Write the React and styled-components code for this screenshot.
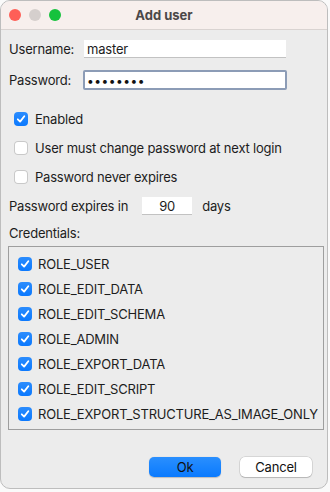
import React from 'react';
import styled, { createGlobalStyle } from 'styled-components';

const GlobalStyle = createGlobalStyle`
  html, body {
    margin: 0;
    padding: 0;
    background: #fafafa;
  }
  body {
    font-family: Inter, "Noto Sans", "Liberation Sans", sans-serif;
    font-size: 13px;
    letter-spacing: -0.2px;
    color: #1d1d1d;
  }
`;

const roles = [
  'ROLE_USER',
  'ROLE_EDIT_DATA',
  'ROLE_EDIT_SCHEMA',
  'ROLE_ADMIN',
  'ROLE_EXPORT_DATA',
  'ROLE_EDIT_SCRIPT',
  'ROLE_EXPORT_STRUCTURE_AS_IMAGE_ONLY',
];

function CheckBox({ checked }) {
  return (
    <Box $checked={checked}>
      {checked && (
        <svg width="10" height="10" viewBox="0 0 10 10">
          <path d="M1.8 5.3 L4.1 7.6 L8.3 2.2" fill="none" stroke="#fff" strokeWidth="1.8" strokeLinecap="round" strokeLinejoin="round" />
        </svg>
      )}
    </Box>
  );
}

export default function App() {
  return (
    <>
      <GlobalStyle />
      <Window>
        <TitleBar>
          <Lights>
            <Light $color="#fe5f57" />
            <Light $color="#d5cfcd" />
            <Light $color="#16c23d" />
          </Lights>
          <Title>Add user</Title>
        </TitleBar>
        <Content>
          <FieldRow>
            <Label>Username:</Label>
            <TextField>master</TextField>
          </FieldRow>
          <FieldRow $top={11}>
            <Label>Password:</Label>
            <TextField $focused>
              <Dots>••••••••</Dots>
            </TextField>
          </FieldRow>
          <Options>
            <OptionRow>
              <CheckBox checked />
              <span>Enabled</span>
            </OptionRow>
            <OptionRow>
              <CheckBox />
              <span>User must change password at next login</span>
            </OptionRow>
            <OptionRow>
              <CheckBox />
              <span>Password never expires</span>
            </OptionRow>
          </Options>
          <ExpiresRow>
            <span>Password expires in</span>
            <DaysField>90</DaysField>
            <span>days</span>
          </ExpiresRow>
          <SectionLabel>Credentials:</SectionLabel>
          <RoleList>
            {roles.map((r) => (
              <RoleRow key={r}>
                <CheckBox checked />
                <span>{r}</span>
              </RoleRow>
            ))}
          </RoleList>
          <Buttons>
            <Button $primary>Ok</Button>
            <Button>Cancel</Button>
          </Buttons>
        </Content>
      </Window>
    </>
  );
}

const Window = styled.div`
  width: 328px;
  height: 489px;
  box-sizing: border-box;
  border: 1px solid #bdbdbd;
  border-radius: 10px;
  background: #ececec;
  overflow: hidden;
  display: flex;
  flex-direction: column;
`;

const TitleBar = styled.div`
  position: relative;
  height: 28px;
  flex-shrink: 0;
  background: #f7efed;
  border-bottom: 1px solid #d9d3d1;
  display: flex;
  align-items: center;
  justify-content: center;
`;

const Lights = styled.div`
  position: absolute;
  left: 8px;
  top: 8px;
  display: flex;
  gap: 8px;
`;

const Light = styled.div`
  width: 12px;
  height: 12px;
  border-radius: 50%;
  background: ${(p) => p.$color};
`;

const Title = styled.div`
  font-weight: 700;
  font-size: 13px;
  letter-spacing: 0;
  color: #4b4848;
`;

const Content = styled.div`
  display: flex;
  flex-direction: column;
  padding: 9px 15px 0 7px;
`;

const FieldRow = styled.div`
  display: flex;
  align-items: center;
  height: 20px;
  margin-top: ${(p) => p.$top || 0}px;
  padding-left: 1px;
`;

const Label = styled.div`
  width: 75px;
  flex-shrink: 0;
`;

const TextField = styled.div`
  box-sizing: border-box;
  width: ${(p) => (p.$focused ? 204 : 202)}px;
  height: ${(p) => (p.$focused ? 20 : 18)}px;
  margin-left: ${(p) => (p.$focused ? -1 : 0)}px;
  background: #fff;
  border: ${(p) => (p.$focused ? '2px solid #8c9cb6' : 'none')};
  box-shadow: ${(p) => (p.$focused ? 'none' : 'inset 0 -1px 0 #c2c2c2')};
  border-radius: ${(p) => (p.$focused ? 2 : 0)}px;
  display: flex;
  align-items: center;
  padding-left: ${(p) => (p.$focused ? 2 : 3)}px;
`;

const Dots = styled.span`
  font-size: 12px;
  letter-spacing: 0.5px;
  color: #111;
`;

const Options = styled.div`
  display: flex;
  flex-direction: column;
  margin-top: 14px;
  padding-left: 6px;
`;

const OptionRow = styled.div`
  display: flex;
  align-items: center;
  gap: 7px;
  height: 29px;
`;

const Box = styled.div`
  box-sizing: border-box;
  width: 14px;
  height: 14px;
  flex-shrink: 0;
  border-radius: 4px;
  display: flex;
  align-items: center;
  justify-content: center;
  background: ${(p) => (p.$checked ? 'linear-gradient(#2b8cfd, #0b79fe)' : '#fff')};
  box-shadow: ${(p) => (p.$checked ? 'none' : 'inset 0 0 0 1px #c9c9c9')};
`;

const ExpiresRow = styled.div`
  display: flex;
  align-items: center;
  height: 20px;
  margin-top: 5px;
  padding-left: 1px;
  gap: 10px;
`;

const DaysField = styled.div`
  box-sizing: border-box;
  width: 50px;
  height: 18px;
  margin-left: 4px;
  background: #fff;
  box-shadow: inset 0 -1px 0 #c2c2c2;
  display: flex;
  align-items: center;
  justify-content: center;
`;

const SectionLabel = styled.div`
  height: 18px;
  line-height: 18px;
  margin-top: 8px;
  padding-left: 1px;
`;

const RoleList = styled.div`
  box-sizing: border-box;
  width: 316px;
  margin-top: 4px;
  border: 1px solid #9e9e9e;
  padding: 4px 0 3px 9px;
  display: flex;
  flex-direction: column;
`;

const RoleRow = styled.div`
  display: flex;
  align-items: center;
  gap: 6px;
  height: 25px;
`;

const Buttons = styled.div`
  display: flex;
  justify-content: flex-end;
  gap: 19px;
  margin-top: 27px;
`;

const Button = styled.div`
  box-sizing: border-box;
  width: 72px;
  height: 20px;
  border-radius: 5px;
  display: flex;
  align-items: center;
  justify-content: center;
  color: #111;
  background: ${(p) => (p.$primary ? 'linear-gradient(#2a8ffe, #0a7afe)' : '#fff')};
  box-shadow: ${(p) =>
    p.$primary ? '0 0.5px 1px rgba(0,0,0,0.2)' : '0 0 0 0.5px rgba(0,0,0,0.18), 0 1px 1px rgba(0,0,0,0.15)'};
`;
